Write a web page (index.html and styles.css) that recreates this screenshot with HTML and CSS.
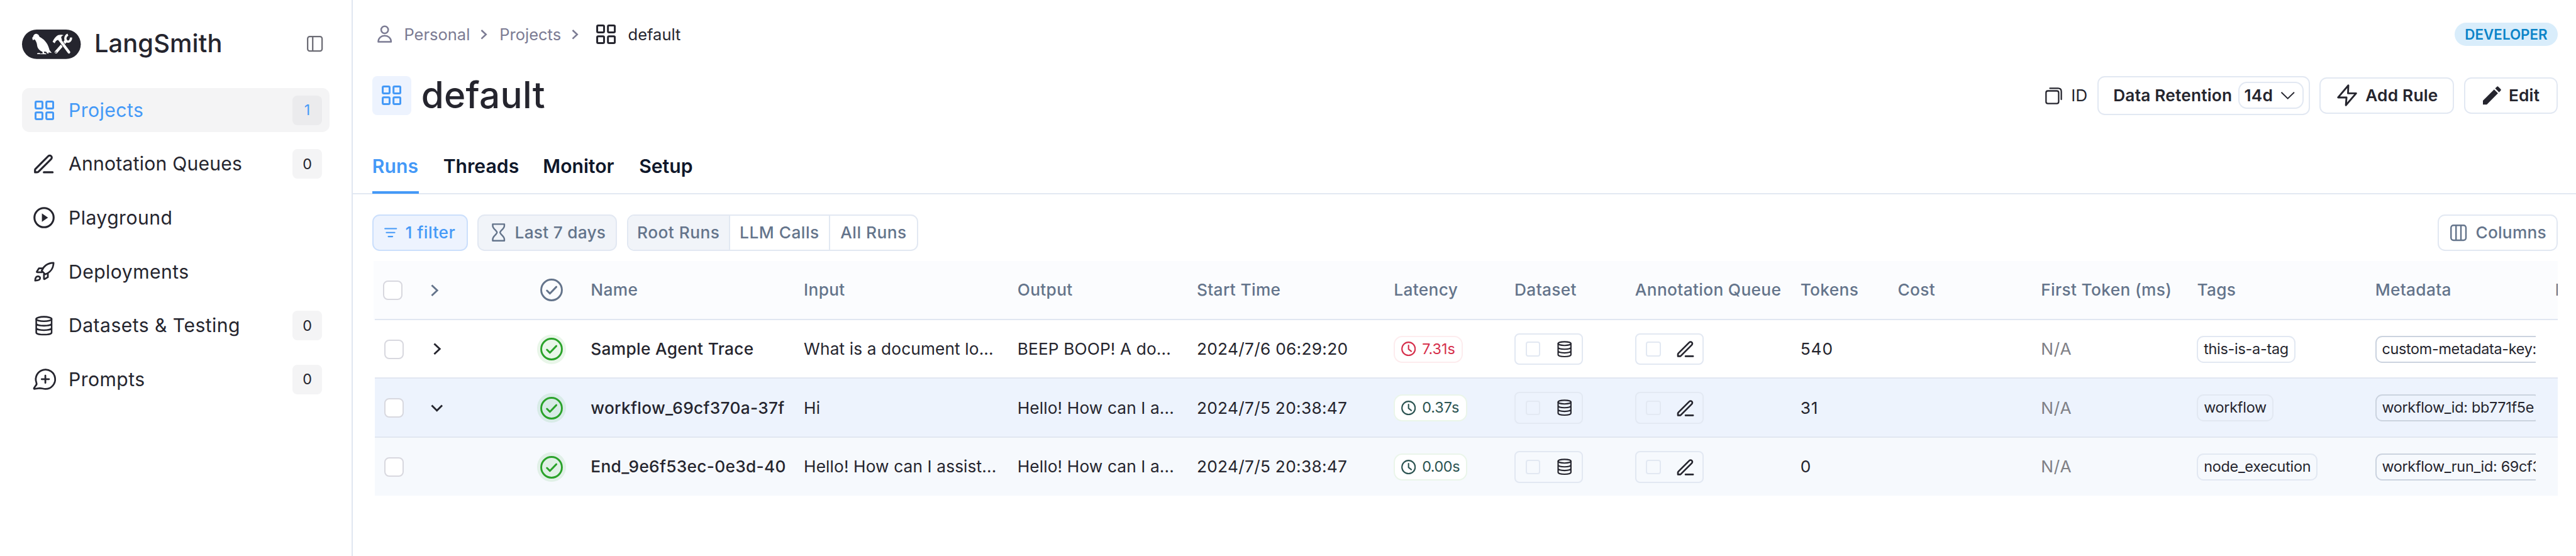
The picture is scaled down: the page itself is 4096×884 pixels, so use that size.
FILE: index.html
```html
<!DOCTYPE html>
<html lang="en">
<head>
<meta charset="utf-8">
<title>LangSmith - default</title>
<link rel="stylesheet" href="styles.css">
</head>
<body>
<svg class="sprite" aria-hidden="true">
  <symbol id="grid" viewBox="0 0 32 32"><g fill="none" stroke="currentColor" stroke-width="3.1"><rect x="1.6" y="1.6" width="11.2" height="11.2" rx="1.8"/><rect x="19.2" y="1.6" width="11.2" height="11.2" rx="1.8"/><rect x="1.6" y="19.2" width="11.2" height="11.2" rx="1.8"/><rect x="19.2" y="19.2" width="11.2" height="11.2" rx="1.8"/></g></symbol>
  <symbol id="pen" viewBox="0 0 24 24"><path fill="none" stroke="currentColor" stroke-width="2" stroke-linecap="round" stroke-linejoin="round" d="M12 20.5H21M3 20.500H4.670C5.160 20.500 5.410 20.500 5.640 20.440C5.840 20.400 6.040 20.310 6.220 20.200C6.420 20.080 6.590 19.910 6.940 19.560L19.500 7C20.330 6.170 20.330 4.830 19.500 4C18.670 3.170 17.330 3.170 16.500 4L3.940 16.560C3.590 16.910 3.420 17.080 3.290 17.280C3.180 17.460 3.100 17.660 3.050 17.860C3 18.090 3 18.340 3 18.830V20.500Z"/></symbol>
  <symbol id="db" viewBox="29 271 86 98"><g fill="none" stroke="currentColor" stroke-width="8" stroke-linecap="round"><ellipse cx="72" cy="287" rx="38" ry="11"/><path d="M34 287V353C34 368 110 368 110 353V287M34 309C34 324 110 324 110 309M34 331C34 346 110 346 110 331"/></g></symbol>
  <symbol id="check" viewBox="0 0 37 37"><g fill="none" stroke="currentColor" stroke-width="3" stroke-linecap="round" stroke-linejoin="round"><circle cx="18.500" cy="18.500" r="16.900"/><path d="M11 19.500L15.800 24.300L26.300 13.500"/></g></symbol>
  <symbol id="clock" viewBox="0 0 24 24"><g fill="none" stroke="currentColor" stroke-width="2.200" stroke-linecap="round" stroke-linejoin="round"><circle cx="12" cy="12" r="10.800"/><path d="M12 6.200V12.500L16.500 16"/></g></symbol>
  <symbol id="chev" viewBox="0 0 13 20"><path fill="none" stroke="currentColor" stroke-width="3" d="M1.500 1.500L10.500 10L1.500 18.500"/></symbol>
</svg>
<div class="app">
  <aside class="sidebar">
    <div class="brand">
      <svg class="logo" viewBox="18 24 288 144">
        <rect x="18" y="24" width="288" height="144" rx="72" fill="#25252e"/>
        <path fill="#fff" d="M69 71C67 64 70 61 73 59C74 48 84 43 92 46C99 47 102 54 104 60C118 66 134 80 142 96C148 108 151 118 153 125L164 139L148 136C150 142 146 143 142 140L136 133L125 132L127 139L137 141V145L92 144V140L104 138L106 142L120 140L117 132C104 128 94 116 92 102C91 92 88 84 83 76L77 72L73 77Z"/>
        <path fill="none" stroke="#fff" stroke-width="14" stroke-linecap="round" d="M185 134L234 79"/>
        <path fill="none" stroke="#fff" stroke-width="11" d="M243 49C228 55 227 75 237 82C248 86 259 78 258 63"/>
        <circle cx="184" cy="135" r="3" fill="#25252e"/>
        <path fill="none" stroke="#25252e" stroke-width="18" d="M207 79L240 126"/>
        <path fill="none" stroke="#fff" stroke-width="13" stroke-linecap="round" d="M203 74L248 135"/>
        <path fill="#fff" d="M168 84C174 70 184 56 196 51C206 48 216 49 222 52C212 55 210 60 210 64L214 73L203 84L195 75C190 76 186 78 183 82L178 91Z"/>
      </svg>
      <span class="wordmark">LangSmith</span>
      <svg class="collapse" viewBox="0 0 26 26"><g fill="none" stroke="currentColor" stroke-width="2.300"><rect x="1.200" y="1.200" width="23.600" height="23.600" rx="3.500"/><path d="M9.500 1V25"/></g></svg>
    </div>
    <nav class="nav">
      <a class="nav-item active"><span class="slot"><svg class="i32"><use href="#grid"/></svg></span>Projects<b class="count">1</b></a>
      <a class="nav-item tight"><span class="slot"><svg class="i38"><use href="#pen"/></svg></span>Annotation Queues<b class="count">0</b></a>
      <a class="nav-item"><span class="slot"><svg class="i35" viewBox="0 0 35 35"><circle cx="17.500" cy="17.500" r="15.700" fill="none" stroke="currentColor" stroke-width="3.200"/><path fill="currentColor" d="M14 10.500L24 17.500L14 24.500Z"/></svg></span>Playground</a>
      <a class="nav-item"><span class="slot"><svg class="rocket" viewBox="22 8 102 99"><g fill="none" stroke="currentColor" stroke-width="8.500" stroke-linejoin="round" stroke-linecap="round"><path d="M60 53L77 70C100 62 117 42 118 14C88 14 68 32 60 53Z"/><path d="M63 41H46L36 57Q35 60 39 60H61"/><path d="M71 70V91Q71 95 75 93L90 84V67"/><path d="M28 101C28 88 33 79 43 80C54 82 55 91 47 97C42 100 34 101 28 101Z"/></g></svg></span>Deployments</a>
      <a class="nav-item"><span class="slot"><svg class="db-lg"><use href="#db"/></svg></span>Datasets &amp; Testing<b class="count">0</b></a>
      <a class="nav-item"><span class="slot"><svg class="chat" viewBox="16 531 114 106"><g fill="none" stroke="currentColor" stroke-width="8.500" stroke-linecap="round" stroke-linejoin="round"><path d="M34 600A47.500 47.500 0 1 1 78 631C68 631 60 627 50 627L26 630.500Q20 631 23 626L32 613Q37 608 34 600"/><path d="M78 565V601M60 583H96"/></g></svg></span>Prompts<b class="count">0</b></a>
    </nav>
  </aside>

  <main class="main">
    <header class="topbar">
      <div class="crumbs">
        <svg class="person" viewBox="0 0 24 29"><g fill="none" stroke="currentColor" stroke-width="2.600" stroke-linejoin="round"><circle cx="12" cy="7.500" r="5.800"/><path d="M1.500 27.300C1.500 21 6.300 17.300 12 17.300C17.700 17.300 22.500 21 22.500 27.300Z"/></g></svg>
        <span class="c-personal">Personal</span>
        <svg class="crumb-chev" viewBox="0 0 11 16"><path fill="none" stroke="currentColor" stroke-width="2.600" d="M1.500 1L9 8L1.500 15"/></svg>
        <span class="c-projects">Projects</span>
        <svg class="crumb-chev" viewBox="0 0 11 16"><path fill="none" stroke="currentColor" stroke-width="2.600" d="M1.500 1L9 8L1.500 15"/></svg>
        <svg class="i32 dark crumb-grid"><use href="#grid"/></svg>
        <span class="dark">default</span>
      </div>
      <span class="plan">DEVELOPER</span>
    </header>

    <div class="title-row">
      <span class="title-icon"><svg class="i32"><use href="#grid"/></svg></span>
      <h1>default</h1>
      <div class="actions">
        <span class="copy"><svg class="copy-icon" viewBox="33 68 84 82"><g fill="none" stroke="currentColor" stroke-width="7" stroke-linecap="round"><rect x="37" y="85" width="62" height="62" rx="9"/><path d="M56 72H96Q112 72 112 88V127"/></g></svg>ID</span>
        <button class="btn retention">Data Retention<span class="days">14d<svg class="down" viewBox="0 0 22 12"><path fill="none" stroke="currentColor" stroke-width="1.900" d="M.5 .8L11 11L21.500 .8"/></svg></span></button>
        <button class="btn rule"><svg class="bolt" viewBox="0 0 33 36"><path fill="none" stroke="currentColor" stroke-width="3" stroke-linejoin="round" d="M18.500 1.800L1.800 21.500H15.500L14.500 34.200L31.200 14.800H18Z"/></svg>Add Rule</button>
        <button class="btn edit"><svg class="pencil" viewBox="0 0 30 30"><path fill="currentColor" d="M0 23.700V30H6.300L24.600 11.600L18.300 5.400ZM20 3.600L22.700 .9Q24 -.3 25.200 .9L29.100 4.800Q30.300 6 29.100 7.200L26.400 9.900Z"/></svg>Edit</button>
      </div>
    </div>

    <div class="tabs"><a class="tab on">Runs</a><a class="tab">Threads</a><a class="tab monitor">Monitor</a><a class="tab">Setup</a></div>

    <div class="toolbar">
      <button class="tool filter"><svg class="lines" viewBox="0 0 21 16"><path fill="none" stroke="currentColor" stroke-width="2.200" stroke-linecap="round" d="M1.200 1.500H19.800M3.500 8H17M6.700 14.500H13.500"/></svg>1 filter</button>
      <button class="tool range"><svg class="hourglass" viewBox="0 0 22 30"><path fill="none" stroke="currentColor" stroke-width="2.500" stroke-linejoin="round" d="M1.500 1.400H20.500V4C20.500 9 13.500 12 13.500 15C13.500 18 20.500 21 20.500 26V28.600H1.500V26C1.500 21 8.500 18 8.500 15C8.500 12 1.500 9 1.500 4Z"/></svg>Last 7 days</button>
      <div class="segments"><span class="seg sel">Root Runs</span><span class="seg">LLM Calls</span><span class="seg">All Runs</span></div>
      <button class="tool columns"><svg class="cols" viewBox="0 0 27 27"><g fill="none" stroke="currentColor" stroke-width="2.500"><rect x="1.300" y="1.300" width="24.400" height="24.400" rx="4"/><path d="M9.500 1V26M17.500 1V26"/></g></svg>Columns</button>
    </div>

    <div class="table">
      <div class="row head">
        <div class="cell cb"><i class="box"></i></div>
        <div class="cell expand"><svg class="chev"><use href="#chev"/></svg></div>
        <div class="cell status"><span class="halo"><svg class="i37"><use href="#check"/></svg></span></div>
        <div class="cell">Name</div><div class="cell">Input</div><div class="cell">Output</div><div class="cell">Start Time</div><div class="cell">Latency</div><div class="cell">Dataset</div><div class="cell">Annotation Queue</div><div class="cell">Tokens</div><div class="cell">Cost</div><div class="cell">First Token (ms)</div><div class="cell">Tags</div><div class="cell">Metadata</div><div class="cell clip">I</div>
      </div>
      <div class="row">
        <div class="cell cb"><i class="box"></i></div>
        <div class="cell expand"><svg class="chev"><use href="#chev"/></svg></div>
        <div class="cell status"><span class="halo"><svg class="i37"><use href="#check"/></svg></span></div>
        <div class="cell name">Sample Agent Trace</div>
        <div class="cell">What is a document lo...</div>
        <div class="cell">BEEP BOOP! A do...</div>
        <div class="cell time">2024/7/6 06:29:20</div>
        <div class="cell"><span class="latency slow"><svg class="i24"><use href="#clock"/></svg>7.31s</span></div>
        <div class="cell"><span class="add"><i class="mini"></i><svg class="db-sm"><use href="#db"/></svg></span></div>
        <div class="cell"><span class="add"><i class="mini"></i><svg class="pen-sm"><use href="#pen"/></svg></span></div>
        <div class="cell num">540</div><div class="cell"></div><div class="cell na">N/A</div>
        <div class="cell"><span class="tag">this-is-a-tag</span></div>
        <div class="cell meta"><span class="tag">custom-metadata-key:</span></div>
      </div>
      <div class="row open">
        <div class="cell cb"><i class="box"></i></div>
        <div class="cell expand down-cell"><svg class="chev-down" viewBox="0 0 20 12"><path fill="none" stroke="currentColor" stroke-width="3" d="M1.500 1.500L10 10L18.500 1.500"/></svg></div>
        <div class="cell status"><span class="halo"><svg class="i37"><use href="#check"/></svg></span></div>
        <div class="cell name">workflow_69cf370a-37f</div>
        <div class="cell">Hi</div>
        <div class="cell">Hello! How can I a...</div>
        <div class="cell time">2024/7/5 20:38:47</div>
        <div class="cell"><span class="latency"><svg class="i24"><use href="#clock"/></svg>0.37s</span></div>
        <div class="cell"><span class="add"><i class="mini"></i><svg class="db-sm"><use href="#db"/></svg></span></div>
        <div class="cell"><span class="add"><i class="mini"></i><svg class="pen-sm"><use href="#pen"/></svg></span></div>
        <div class="cell num">31</div><div class="cell"></div><div class="cell na">N/A</div>
        <div class="cell"><span class="tag">workflow</span></div>
        <div class="cell meta"><span class="tag">workflow_id: bb771f5e</span></div>
      </div>
      <div class="row child">
        <div class="cell cb"><i class="box"></i></div>
        <div class="cell"></div>
        <div class="cell status"><span class="halo"><svg class="i37"><use href="#check"/></svg></span></div>
        <div class="cell name">End_9e6f53ec-0e3d-40</div>
        <div class="cell">Hello! How can I assist...</div>
        <div class="cell">Hello! How can I a...</div>
        <div class="cell time">2024/7/5 20:38:47</div>
        <div class="cell"><span class="latency zero"><svg class="i24"><use href="#clock"/></svg>0.00s</span></div>
        <div class="cell"><span class="add"><i class="mini"></i><svg class="db-sm"><use href="#db"/></svg></span></div>
        <div class="cell"><span class="add"><i class="mini"></i><svg class="pen-sm"><use href="#pen"/></svg></span></div>
        <div class="cell num">0</div><div class="cell"></div><div class="cell na">N/A</div>
        <div class="cell"><span class="tag">node_execution</span></div>
        <div class="cell meta"><span class="tag">workflow_run_id: 69cf3</span></div>
      </div>
    </div>
  </main>
</div>
</body>
</html>
```
FILE: styles.css
```css
* { box-sizing: border-box; }
body { margin: 0; background: #fff; overflow: hidden; }
.app {
  --line: #e2e8f2;
  --ink: #25252e;
  --slate: #64748b;
  --blue: #4499f7;
  zoom: 0.97338;
  width: 4208px;
  height: 908px;
  display: flex;
  overflow: hidden;
  color: var(--ink);
  font-family: Inter, "Liberation Sans", sans-serif;
  font-size: 27px;
  line-height: 1.3;
  white-space: nowrap;
}
.sprite { display: none; }
svg { display: block; flex: none; overflow: visible; }
button { font: inherit; color: inherit; padding: 0; margin: 0; }
.i24 { width: 24px; height: 24px; }
.i32 { width: 32px; height: 32px; }
.i35 { width: 35px; height: 35px; }
.i37 { width: 37px; height: 37px; }
.i38 { width: 38.4px; height: 38.4px; }
.dark { color: var(--ink); }

/* Sidebar */
.sidebar { width: 576px; flex: none; padding: 48px 36px 0; border-right: 2.1px solid #e0e6f1; }
.brand { display: flex; align-items: center; height: 48px; padding-right: 11px; }
.logo { width: 96px; height: 48px; }
.wordmark { margin-left: 22px; padding-bottom: 2px; font-size: 41px; font-weight: 500; letter-spacing: 0.1px; }
.collapse { width: 26px; height: 26px; margin-left: auto; color: #6b6b74; }
.nav { display: flex; flex-direction: column; gap: 16px; margin-top: 48px; }
.nav-item { display: flex; align-items: center; height: 72px; border-radius: 12px; padding-right: 12px; font-size: 31px; letter-spacing: 0.45px; }
.nav-item.tight { letter-spacing: 0.2px; }
.nav-item.active { background: #f4f4f5; color: var(--blue); }
.slot { width: 72px; margin-right: 4px; display: flex; justify-content: center; }
.rocket { width: 34px; height: 33px; }
.db-lg { width: 28.5px; height: 32.5px; }
.chat { width: 38px; height: 35.3px; }
.count { margin-left: auto; width: 48px; height: 48px; border-radius: 8px; background: #f4f4f5; font-size: 24px; font-weight: 400; letter-spacing: 0; display: flex; align-items: center; justify-content: center; }
.active .count { background: #ebebed; }

/* Header */
.main { flex: 1; min-width: 0; padding-top: 36px; }
.topbar { display: flex; align-items: center; justify-content: space-between; height: 40px; padding: 0 30px 0 40px; }
.crumbs { display: flex; align-items: center; font-size: 26.2px; color: #7b7b93; }
.person { width: 24px; height: 29px; }
.c-personal { margin-left: 20px; width: 106px; }
.c-projects { width: 99px; margin-left: 20px; }
.crumb-chev { width: 11px; height: 16px; margin-left: 19px; }
.crumb-grid { margin: 0 20px 0 29px; }
.plan { height: 38px; width: 168px; border-radius: 19px; display: flex; align-items: center; justify-content: center; background: #d9edfb; color: #0b84c8; font-size: 23px; font-weight: 600; }
.title-row { display: flex; align-items: center; height: 64px; margin-top: 48px; padding: 0 30px 0 32px; }
.title-icon { width: 64px; height: 64px; border-radius: 8px; background: #edf3fe; color: var(--blue); display: flex; align-items: center; justify-content: center; }
h1 { margin: 0 0 1px 16px; font-size: 60px; font-weight: 500; line-height: 1; letter-spacing: 0.3px; }
.actions { margin-left: auto; display: flex; align-items: center; gap: 16px; font-weight: 600; }
.copy { display: flex; align-items: center; gap: 14px; font-weight: 400; }
.copy-icon { width: 28px; height: 27.3px; }
.btn { display: flex; align-items: center; height: 60px; border: 2.1px solid var(--line); border-radius: 12px; background: #fff; font-weight: 600; letter-spacing: 0.2px; }
.retention { width: 347px; height: 64px; padding: 0 8px 0 24px; justify-content: space-between; }
.days { width: 107px; height: 44px; border: 2.1px solid var(--line); border-radius: 14px; padding: 0 13px 0 8px; display: flex; align-items: center; justify-content: space-between; }
.down { width: 22px; height: 12px; }
.rule { width: 220px; padding-left: 27px; gap: 13px; }
.bolt { width: 33px; height: 36px; }
.edit { width: 153px; padding-left: 29px; gap: 12px; }
.pencil { width: 30px; height: 30px; }

/* Tabs */
.tabs { display: flex; gap: 40px; margin-top: 40px; height: 90px; padding-left: 32px; border-bottom: 2.1px solid var(--line); font-size: 31px; font-weight: 600; color: #0f172a; }
.tab { display: flex; align-items: center; height: 88px; width: 123px; }
.tab.monitor { width: 117px; }
.tab.on { width: 76px; color: var(--blue); box-shadow: inset 0 -4px 0 var(--blue); }

/* Toolbar */
.toolbar { display: flex; gap: 16px; padding: 32px 30px 16px 32px; font-weight: 500; color: var(--slate); }
.tool { display: flex; align-items: center; height: 60px; border: 2.1px solid var(--line); border-radius: 12px; background: #fff; font-weight: 500; letter-spacing: 0.25px; }
.filter { width: 156px; padding-left: 18px; gap: 13px; background: #edf3fe; border-color: #cbdffc; color: var(--blue); letter-spacing: 0.5px; }
.lines { width: 21px; height: 16px; }
.range { width: 228px; padding-left: 21px; gap: 16px; background: #f1f4f9; }
.hourglass { width: 22px; height: 30px; }
.segments { display: flex; height: 60px; width: 476px; border: 2.1px solid var(--line); border-radius: 12px; overflow: hidden; letter-spacing: 0.5px; }
.seg { display: flex; align-items: center; justify-content: center; flex: 144; }
.seg + .seg { border-left: 2.1px solid var(--line); }
.seg.sel { flex: 167; background: #f1f4f9; }
.seg:nth-child(2) { flex: 164; }
.columns { width: 196px; margin-left: auto; padding-left: 18px; gap: 15px; }
.cols { width: 27px; height: 27px; }

/* Runs table */
.table { margin: 0 30px 0 36px; }
.row {
  display: grid;
  grid-template-columns: 88px 177px 88px 348px 349px 293px 322px 197px 197px 270px 159px 234px 255px 291px 294px 4px;
  height: 96px;
  padding-top: 1px;
  border-bottom: 2.1px solid #e1e7f1;
  letter-spacing: 0.12px;
}
.row.head { height: 97px; background: #fbfcfe; box-shadow: -2px 0 0 #fbfcfe; color: var(--slate); font-weight: 500; letter-spacing: 0.35px; }
.row.open { background: #edf3fd; }
.row.child { height: 95px; background: #f6f9fd; border-bottom: 0; }
.cell { display: flex; align-items: center; min-width: 0; }
.clip { overflow: hidden; }
.cb { padding-left: 16px; }
.head .cb { padding-left: 14px; }
.box { width: 32px; height: 32px; border: 2.1px solid #d8d8df; border-radius: 8px; background: #fff; }
.expand { padding-left: 8px; }
.head .expand { padding-left: 4px; }
.expand.down-cell { padding-left: 4px; }
.chev { width: 13px; height: 20px; }
.chev-down { width: 20px; height: 12px; }
.halo { width: 48px; height: 48px; border-radius: 50%; background: rgba(42, 162, 42, 0.1); color: #2aa22a; display: flex; align-items: center; justify-content: center; }
.head .halo { background: none; color: var(--slate); }
.name { font-weight: 500; letter-spacing: 0.32px; }
.time { letter-spacing: 0.3px; }
.num { letter-spacing: 1px; }
.na { color: #808086; letter-spacing: 0.9px; }
.latency { display: flex; align-items: center; gap: 10px; height: 44px; width: 120px; padding-left: 10px; border: 2.1px solid #eaf5ea; border-radius: 14px; background: #fff; font-size: 24px; letter-spacing: 0; color: #2c5452; }
.latency.slow { width: 113px; border-color: #fdecee; color: #d6304c; }
.latency.zero { letter-spacing: -0.45px; }
.add { display: flex; align-items: center; justify-content: space-between; width: 112px; height: 52px; padding: 0 16px; border: 2.1px solid var(--line); border-radius: 8px; }
.mini { width: 24px; height: 24px; border: 2.1px solid var(--line); border-radius: 4px; }
.open .add, .open .mini { border-color: #e3e9f3; }
.db-sm { width: 24px; height: 27px; }
.pen-sm { width: 33px; height: 33px; margin-right: -5px; }
.tag { display: flex; align-items: center; flex: none; height: 44px; padding: 0 9px; border: 2.1px solid var(--line); border-radius: 11px; font-size: 24px; letter-spacing: -0.25px; }
.meta { width: 262px; overflow: hidden; }
.meta .tag { border-color: #cbd3df; letter-spacing: -0.3px; }
```
